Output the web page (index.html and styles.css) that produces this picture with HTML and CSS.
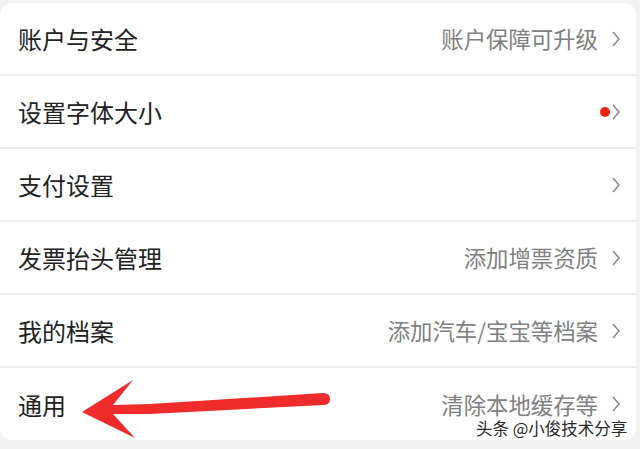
FILE: index.html
```html
<!DOCTYPE html>
<html lang="zh-CN">
<head>
  <meta charset="UTF-8" />
  <meta name="viewport" content="width=device-width, initial-scale=1.0"/>
  <title>设置</title>
  <link rel="stylesheet" href="styles.css">
</head>
<body>

  <div class="card">
    <div class="row">
      <span class="label">账户与安全</span>
      <span class="hint">账户保障可升级</span>
      <svg class="chev" viewBox="0 0 8 16"><polyline points="1,1 7,8 1,15" /></svg>
    </div>
    <div class="row">
      <span class="label">设置字体大小</span>
      <span class="dot"></span>
      <svg class="chev" viewBox="0 0 8 16"><polyline points="1,1 7,8 1,15" /></svg>
    </div>
    <div class="row">
      <span class="label">支付设置</span>
      <svg class="chev" viewBox="0 0 8 16"><polyline points="1,1 7,8 1,15" /></svg>
    </div>
    <div class="row">
      <span class="label">发票抬头管理</span>
      <span class="hint">添加增票资质</span>
      <svg class="chev" viewBox="0 0 8 16"><polyline points="1,1 7,8 1,15" /></svg>
    </div>
    <div class="row">
      <span class="label">我的档案</span>
      <span class="hint">添加汽车/宝宝等档案</span>
      <svg class="chev" viewBox="0 0 8 16"><polyline points="1,1 7,8 1,15" /></svg>
    </div>
    <div class="row">
      <span class="label">通用</span>
      <span class="hint">清除本地缓存等</span>
      <svg class="chev" viewBox="0 0 8 16"><polyline points="1,1 7,8 1,15" /></svg>
    </div>
  </div>

  <!-- annotation arrow drawn over the list -->
  <svg class="arrow" width="640" height="449" viewBox="0 0 640 449">
    <path d="M82 412 L133 380 L113 405 L150 404 L323 393 Q330 393 330 399 Q330 405 323 405 L150 414 L113 414 L135 438 Z" />
  </svg>

  <div class="mark">头条 @小俊技术分享</div>

</body>
</html>
```

FILE: styles.css
```css
body {
  margin: 0;
  background: #f2f2f2;
  font-family: "Noto Sans CJK SC", "Noto Sans", sans-serif;
  height: 449px;
  overflow: hidden;
  position: relative;
}

.card {
  margin: 3px 4px 0 0;
  background: #fff;
  border-radius: 12px;
}

.row {
  box-sizing: border-box;
  height: 73px;
  display: flex;
  align-items: center;
  padding: 0 16px 0 18px;
  border-bottom: 2px solid #ececec;
}

.row:last-child {
  border-bottom: none;
  height: 72px;
}

.label {
  flex: 1;
  font-size: 24px;
  color: #222;
}

.hint {
  font-size: 22.4px;
  line-height: 1;
  color: #808080;
  margin-right: 14px;
}

.chev {
  width: 8px;
  height: 16px;
  fill: none;
  stroke: #8a8a8a;
  stroke-width: 1.6;
}

.dot {
  width: 10px;
  height: 10px;
  border-radius: 50%;
  background: #ee2211;
  margin-right: 2px;
}

.arrow {
  position: absolute;
  left: 0;
  top: 0;
  fill: #ef2b2b;
}

.mark {
  position: absolute;
  left: 476px;
  top: 420px;
  font-size: 16.5px;
  line-height: 1;
  color: #2a2a2a;
  text-shadow: 0 0 2px #fff, 0 0 2px #fff;
}
```
